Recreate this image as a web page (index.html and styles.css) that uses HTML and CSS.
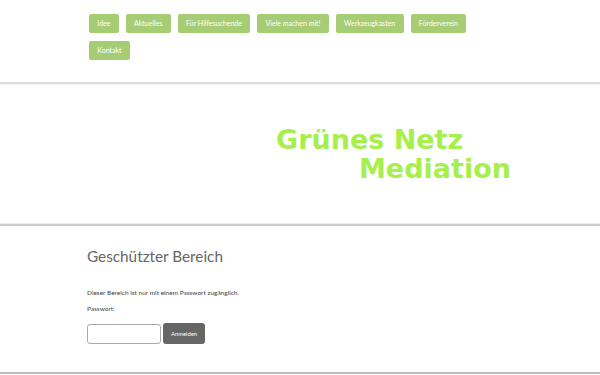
FILE: index.html
```html
<!DOCTYPE html>
<html lang="de">
<head>
    <meta charset="UTF-8">
    <meta name="viewport" content="width=device-width, initial-scale=1.0">
    <title>Geschützter Bereich - Grünes Netz Mediation</title>
    <link rel="stylesheet" href="styles.css">
</head>
<body>
    <div class="navbar">
        <ul class="nav">
            <li><a href="#">Idee</a></li>
            <li><a href="#">Aktuelles</a></li>
            <li><a href="#">Für Hilfesuchende</a></li>
            <li><a href="#">Viele machen mit!</a></li>
            <li><a href="#">Werkzeugkasten</a></li>
            <li><a href="#">Förderverein</a></li>
            <li><a href="#">Kontakt</a></li>
        </ul>
    </div>

    <div class="header">
        <div class="logo">
            <span class="logo-line">Grünes Netz</span>
            <span class="logo-line second">Mediation</span>
        </div>
    </div>

    <div class="content">
        <h1>Geschützter Bereich</h1>
        <p class="info">Dieser Bereich ist nur mit einem Passwort zugänglich.</p>
        <form class="login" onsubmit="return false;">
            <label for="pw">Passwort:</label>
            <div class="login-row">
                <input type="password" id="pw">
                <button type="submit">Anmelden</button>
            </div>
        </form>
    </div>
</body>
</html>
```

FILE: styles.css
```css
body {
    margin: 0;
    background: #fff;
    font-family: Lato, "Open Sans", sans-serif;
    color: #444;
}

/* Navigation oben */
.navbar {
    height: 84px;
    box-sizing: border-box;
    padding: 14px 0 0 89px;
    border-bottom: 2px solid #dddddd;
}
.nav {
    list-style: none;
    margin: 0;
    padding: 0;
    display: flex;
    flex-wrap: wrap;
    gap: 8px 7px;
    width: 400px;
}
.nav a {
    display: block;
    height: 19px;
    line-height: 19px;
    padding: 0 8.3px;
    background: #a7cd74;
    color: #fff;
    font-size: 7px;
    text-decoration: none;
    border-radius: 2px;
}

/* Kopfbereich mit Logo */
.header {
    height: 142px;
    box-sizing: border-box;
    padding: 40px 0 0 276px;
    border-top: 1px solid #f0f0f0;
    border-bottom: 2px solid #cccccc;
    box-shadow: 0 -1px 0 #eeeeee inset;
}
.logo {
    font-family: "DejaVu Sans", sans-serif;
    font-weight: bold;
    font-size: 27px;
    line-height: 29px;
    color: #a6ef4d;
}
.logo-line {
    display: block;
}
.logo-line.second {
    margin-left: 83px;
}

/* Inhalt */
.content {
    height: 148px;
    box-sizing: border-box;
    padding: 20px 0 0 87px;
    border-bottom: 2px solid #bbbbbb;
}
.content h1 {
    margin: 0;
    font-size: 15.3px;
    line-height: 20px;
    font-weight: normal;
    color: #666;
}
.info {
    margin: 21.5px 0 0;
    font-size: 6.5px;
    line-height: 9px;
}
.login label {
    display: block;
    margin-top: 7.7px;
    font-size: 6.5px;
    line-height: 9px;
}
.login-row {
    display: flex;
    margin-top: 10.6px;
    gap: 2px;
}
.login input {
    width: 74px;
    height: 20px;
    box-sizing: border-box;
    border: 1px solid #aaaaaa;
    border-radius: 3px;
    padding: 0 4px;
    background: #fff;
}
.login button {
    width: 42px;
    height: 21px;
    margin-top: -1px;
    border: none;
    border-radius: 3px;
    background: #666666;
    color: #fff;
    font-family: Lato, sans-serif;
    font-size: 5.8px;
    padding: 0;
}
```
